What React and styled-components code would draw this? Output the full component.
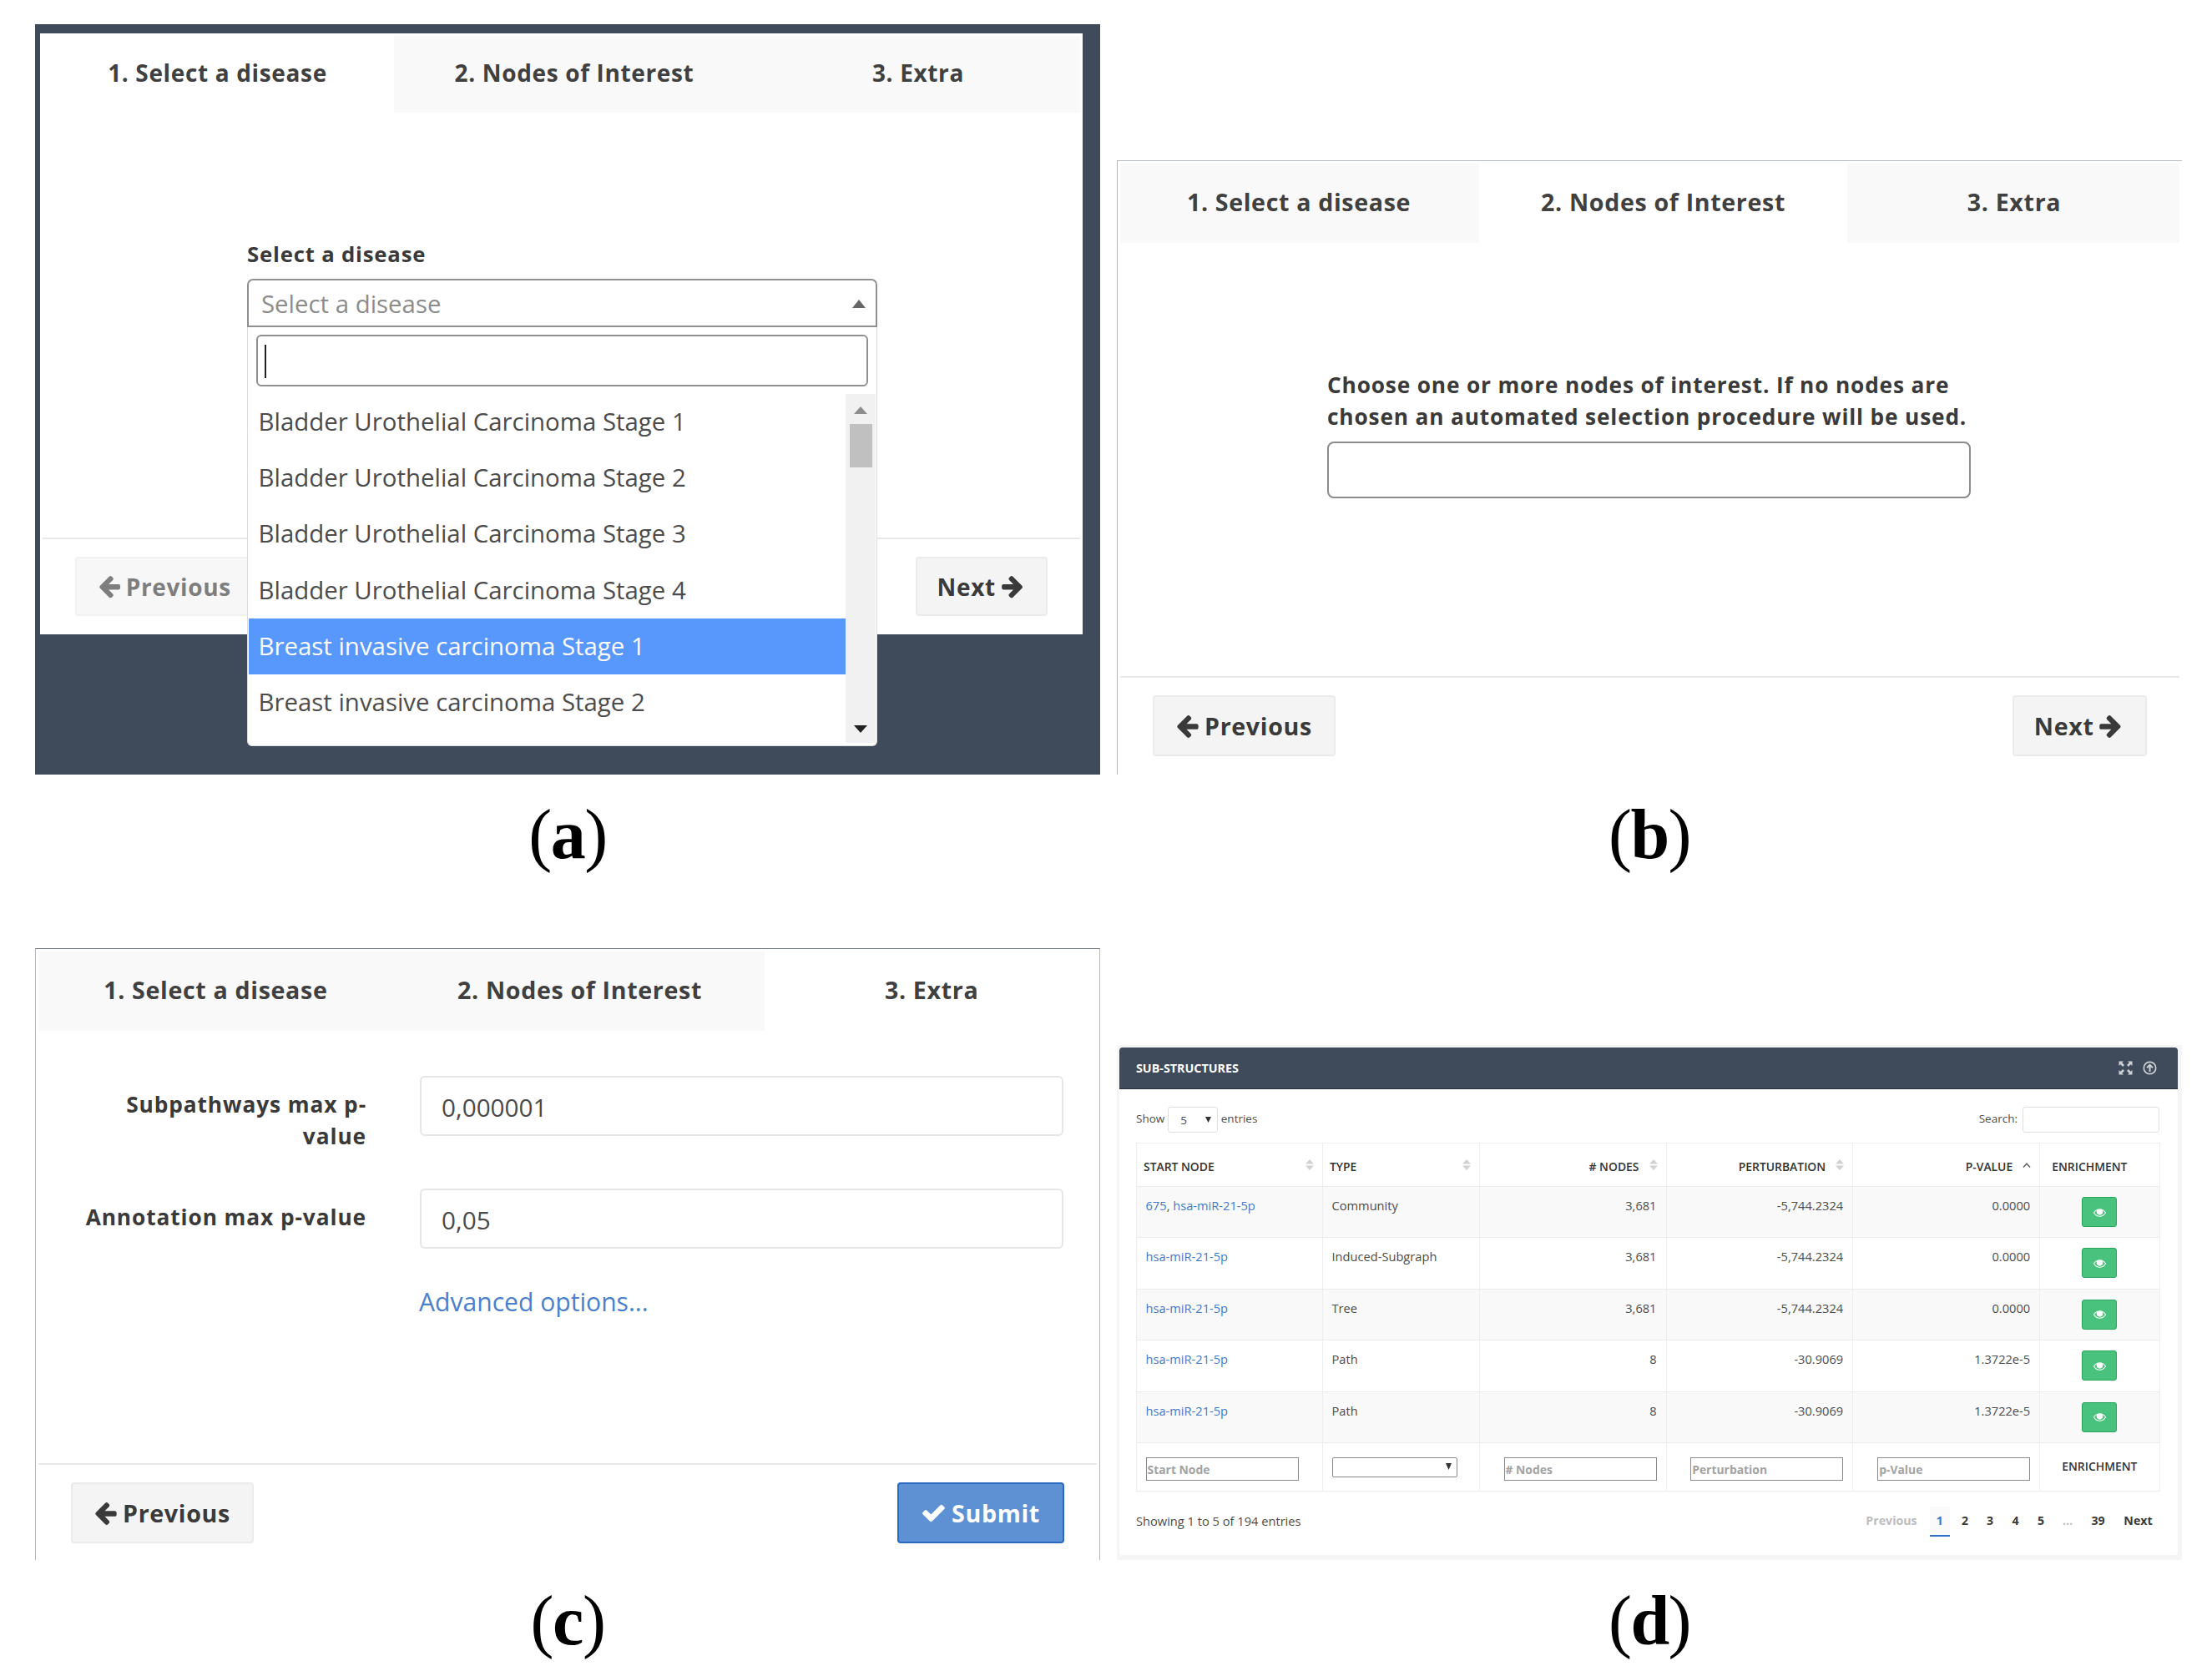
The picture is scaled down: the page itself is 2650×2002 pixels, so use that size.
import React from 'react';
import styled, { createGlobalStyle } from 'styled-components';

const GlobalStyle = createGlobalStyle`
  * {
    box-sizing: border-box;
  }

  body {
    margin: 0;
    background: #fff;
    color: #3a3a3a;
    font-family: 'Open Sans', 'Noto Sans', sans-serif;
  }
`;

const Page = styled.main`
  width: 2650px;
  height: 2002px;
  padding: 29px 36px 0 42px;
  display: grid;
  grid-template-columns: 1276px 1276px;
  grid-template-rows: 1032px 941px;
  column-gap: 20px;
  overflow: hidden;
`;

const Figure = styled.figure`
  margin: 0;
  display: flex;
  flex-direction: column;
  justify-content: flex-end;
`;

const Caption = styled.figcaption`
  height: 133px;
  padding-top: ${props => props.$offset || 22}px;
  text-align: center;
  font-family: 'Liberation Serif', serif;
  font-size: 84px;
  line-height: 100px;
  letter-spacing: -1.5px;
  color: #000;
`;

/* ---------- wizard ---------- */

const Backdrop = styled.div`
  height: 899px;
  padding: 11px 21px 168px 6px;
  background: #3f4a5a;
`;

const Wizard = styled.section`
  height: ${props => props.$height}px;
  font-size: ${props => props.$size}px;
  display: flex;
  flex-direction: column;
  background: #fff;
  border: 0 solid #b4b6ba;
  border-width: ${props => props.$borders || '0'};
  border-top-color: ${props => props.$topColor || '#b5bcc5'};
`;

const Tabs = styled.nav`
  height: ${props => props.$height}px;
  padding: 3px 3px 0;
  display: flex;
  flex-shrink: 0;
`;

const Tab = styled.div`
  width: ${props => props.$width}px;
  padding-bottom: 5px;
  display: flex;
  align-items: center;
  justify-content: center;
  background: ${props => (props.$active ? '#fff' : '#f9f9f9')};
  color: #404040;
  font-weight: 700;
  letter-spacing: 0.023em;
  white-space: nowrap;

  &:first-child {
    padding-right: 2px;
  }

  &:last-child {
    padding-left: 2px;
  }
`;

const Body = styled.div`
  flex: 1;
  min-height: 0;
  padding: ${props => props.$padding};
`;

const Footer = styled.footer`
  height: ${props => props.$height}px;
  flex-shrink: 0;
  margin: 0 3px;
  padding: 21px 39px 0;
  display: flex;
  justify-content: space-between;
  align-items: flex-start;
  border-top: 2px solid #e8e8e8;
`;

const Button = styled.button`
  height: 2.54em;
  padding: ${props => (props.$primary ? '0 0.95em 0 0.91em' : '0 0.9em 0 0.85em')};
  display: flex;
  align-items: center;
  gap: ${props => (props.$primary ? 0.22 : 0.17)}em;
  font: inherit;
  font-weight: 700;
  letter-spacing: 0.023em;
  color: ${props => (props.$primary ? '#fff' : '#3a3a3a')};
  background: ${props => (props.$primary ? '#5d91d3' : '#f4f4f4')};
  border: 2px solid ${props => (props.$primary ? '#2a6ac0' : '#ebebeb')};
  border-radius: 4px;
  opacity: ${props => (props.disabled ? 0.65 : 1)};

  svg {
    width: 1.08em;
    height: 1.08em;
    fill: currentColor;
  }
`;

const Label = styled.label`
  display: block;
  font-size: 0.92em;
  line-height: 38.4px;
  font-weight: 700;
  letter-spacing: 0.031em;
  color: #3a3a3a;
`;

const Field = styled.div`
  position: relative;
  width: ${props => props.$width}px;
  display: flex;
  flex-direction: column;
  gap: 10.6px;
`;

const NodesInput = styled.div`
  height: 68px;
  border: 2px solid #8c8c8c;
  border-radius: 8px;
`;

const SelectBox = styled.div`
  height: 58px;
  padding: 2px 12px 0 15px;
  display: flex;
  align-items: center;
  justify-content: space-between;
  border: 2px solid #909090;
  border-radius: 7px 7px 0 0;
  font-size: 29.4px;
  color: #8c8c8c;
`;

const Dropdown = styled.div`
  position: absolute;
  z-index: 1;
  top: 107px;
  left: 0;
  width: 755px;
  height: 502px;
  padding: 9px 1px 4px 1px;
  background: #fff;
  border: 1px solid #dcdcdc;
  border-top: 0;
  border-radius: 0 0 6px 6px;
`;

const SearchBox = styled.div`
  height: 62px;
  margin: 0 9px 9px 9px;
  padding: 10px 8px;
  border: 2px solid #909090;
  border-radius: 6px;
`;

const Caret = styled.div`
  width: 2px;
  height: 40px;
  background: #222;
`;

const List = styled.div`
  height: 418px;
  display: flex;
  overflow: hidden;
`;

const Options = styled.div`
  flex: 1;
`;

const Option = styled.div`
  height: 67.2px;
  padding: 0 0 1px 11.5px;
  display: flex;
  align-items: center;
  font-size: 29.4px;
  color: ${props => (props.$active ? '#fff' : '#4c4c4c')};
  background: ${props => (props.$active ? '#5897fc' : 'transparent')};
`;

const Scrollbar = styled.div`
  width: 36px;
  padding: 15px 0 12px;
  display: flex;
  flex-direction: column;
  align-items: center;
  background: #f1f1f1;
`;

const Thumb = styled.div`
  width: 27px;
  height: 52px;
  margin: 12px 0 auto;
  background: #c0c0c0;
`;

const FormRow = styled.div`
  margin-bottom: 43px;
  display: flex;
  align-items: flex-start;
`;

const FormLabel = styled(Label)`
  width: 396px;
  min-height: ${props => props.$minHeight}px;
  margin-right: 64px;
  padding-top: 15px;
  letter-spacing: 0.034em;
  text-align: right;
  white-space: nowrap;
`;

const TextInput = styled.div`
  width: 771px;
  height: 72px;
  padding: 3px 24px 0;
  display: flex;
  align-items: center;
  border: 2px solid #e6e6e6;
  border-radius: 6px;
  font-size: 29.7px;
  color: #4a4a4a;
`;

const AdvancedLink = styled.a`
  display: block;
  margin: 44px 0 0 459px;
  font-size: 30.1px;
  line-height: 40px;
  color: #4a80cc;
`;

/* ---------- results table ---------- */

const ResultsFrame = styled.div`
  height: 617px;
  padding: 3px 5px 6px 3px;
  background: #f5f5f5;
`;

const Results = styled.section`
  height: 608px;
  background: #fff;
  border-radius: 4px;
  font-size: 14.65px;
  color: #4c4c4c;
`;

const ResultsHeader = styled.header`
  height: 50px;
  padding: 0 25px 1px 20px;
  display: flex;
  align-items: center;
  justify-content: space-between;
  background: #3f4a5a;
  border-bottom: 1px solid #242f42;
  border-radius: 4px 4px 0 0;
`;

const ResultsTitle = styled.h2`
  margin: 0;
  font-size: 14.3px;
  font-weight: 700;
  color: #fff;
`;

const HeaderIcons = styled.div`
  display: flex;
  gap: 12px;
  color: #cdd1d6;
`;

const Toolbar = styled.div`
  height: 64px;
  padding: 21px 22px 0 20px;
  display: flex;
  justify-content: space-between;
  align-items: flex-start;
  font-size: 13.5px;
`;

const Control = styled.label`
  height: 31px;
  padding-bottom: 4px;
  display: flex;
  align-items: center;
`;

const LengthSelect = styled.span`
  width: 59.5px;
  height: 31px;
  margin: 4px 4px 0 4px;
  padding: 0 7px 0 14px;
  display: flex;
  align-items: center;
  justify-content: space-between;
  border: 1px solid #dfdfdf;
  border-radius: 3px;
`;

const TableSearch = styled.span`
  width: 164px;
  height: 31px;
  margin: 4px 0 0 6px;
  border: 1px solid #dfdfdf;
  border-radius: 3px;
`;

const Table = styled.div`
  width: 1227px;
  margin-left: 20px;
  border: solid #eeeeee;
  border-width: 1px 1px 0;
`;

const Row = styled.div`
  height: ${props => props.$height || 61.4}px;
  display: grid;
  grid-template-columns: 222px 187.5px 224px 223.7px 224px 1fr;
  background: ${props => (props.$striped ? '#f9f9f9' : '#fff')};
  border-bottom: 1px solid #ececec;
`;

const Cell = styled.div`
  padding: 12px 11px 0 10.5px;
  line-height: 20px;
  text-align: ${props => props.$align || 'left'};
  white-space: nowrap;

  & + & {
    border-left: 1px solid #eeeeee;
  }
`;

const HeadCell = styled(Cell)`
  padding: 5px 10px 0 8px;
  display: flex;
  align-items: center;
  gap: 12px;
  justify-content: ${props => (props.$align === 'right' ? 'flex-end' : 'space-between')};
  font-size: 13.9px;
  font-weight: 600;
  color: #333;

  svg {
    margin-bottom: 5px;
  }
`;

const LastHeadCell = styled(HeadCell)`
  padding-left: 14px;
`;

const ActionCell = styled(Cell)`
  padding: 12px 0 0 50px;
`;

const ViewButton = styled.button`
  width: 42px;
  height: 36px;
  padding: 0;
  display: flex;
  align-items: center;
  justify-content: center;
  color: #fff;
  background: #48c27c;
  border: 1px solid #28a65e;
  border-radius: 3px;
`;

const NodeLink = styled.a`
  color: #427acb;
`;

const FilterCell = styled(Cell)`
  padding: 17px 11px 0 10.5px;
  display: flex;
  align-items: flex-start;
  justify-content: ${props => (props.$align === 'right' ? 'flex-end' : 'flex-start')};
`;

const FilterInput = styled.div`
  width: 183px;
  height: 28px;
  padding: 4px 1px 0;
  border: 1px solid #8a8a8a;
  font-size: 13.9px;
  font-weight: 700;
  line-height: 20px;
  text-align: left;
  color: #a2a2a2;
`;

const FilterSelect = styled.div`
  width: 150px;
  height: 24px;
  padding: 6px 6px 0 0;
  display: flex;
  justify-content: flex-end;
  align-items: flex-start;
  border: 1px solid #8a8a8a;
  border-radius: 2px;
`;

const FootLabel = styled(Cell)`
  padding: 18px 0 0 26px;
  font-size: 13.9px;
  font-weight: 600;
  color: #333;
`;

const TableFooter = styled.div`
  padding: 18px 16px 0 20px;
  display: flex;
  align-items: flex-start;
  justify-content: space-between;
  line-height: 34px;
`;

const Pagination = styled.nav`
  display: flex;
  font-weight: 700;
  font-size: 14.2px;
`;

const PageItem = styled.span`
  width: ${props => props.$width}px;
  height: 36px;
  text-align: center;
  color: ${props => (props.$active ? '#3a78cc' : props.$muted ? '#bdbdbd' : '#3a3a3a')};
  background: ${props => (props.$active ? '#fafafa' : 'transparent')};
  border-bottom: 2px solid ${props => (props.$active ? '#2f70c8' : 'transparent')};
`;

const ArrowLeft = () => (
  <svg viewBox="0 0 1792 1792">
    <path d="M1664 896v128q0 53-32.5 90.5t-84.5 37.5h-704l293 294q38 36 38 90t-38 90l-75 76q-37 37-90 37-52 0-91-37l-651-652q-37-37-37-90 0-52 37-91l651-650q38-38 91-38 52 0 90 38l75 74q38 38 38 91t-38 91l-293 293h704q52 0 84.5 37.5t32.5 90.5z" />
  </svg>
);

const ArrowRight = () => (
  <svg viewBox="0 0 1792 1792">
    <path d="M1600 960q0 54-37 91l-651 651q-39 37-91 37-51 0-90-37l-75-75q-38-38-38-91t38-91l293-293h-704q-52 0-84.5-37.5t-32.5-90.5v-128q0-53 32.5-90.5t84.5-37.5h704l-293-294q-38-36-38-90t38-90l75-75q38-38 90-38 53 0 91 38l651 651q37 35 37 90z" />
  </svg>
);

const Check = () => (
  <svg viewBox="0 0 1792 1792">
    <path d="M1671 566q0 40-28 68l-724 724-136 136q-28 28-68 28t-68-28l-136-136-362-362q-28-28-28-68t28-68l136-136q28-28 68-28t68 28l294 295 656-657q28-28 68-28t68 28l136 136q28 28 28 68z" />
  </svg>
);

const Eye = () => (
  <svg width="15" height="15" viewBox="0 0 1792 1792" fill="currentColor">
    <path d="M1664 960q-152-236-381-353 61 104 61 225 0 185-131.5 316.5t-316.5 131.5-316.5-131.5-131.5-316.5q0-121 61-225-229 117-381 353 133 205 333.5 326.5t434.5 121.5 434.5-121.5 333.5-326.5zm-720-384q0-20-14-34t-34-14q-125 0-214.5 89.5t-89.5 214.5q0 20 14 34t34 14 34-14 14-34q0-86 61-147t147-61q20 0 34-14t14-34zm848 384q0 34-20 69-140 230-376.5 368.5t-499.5 138.5-499.5-139-376.5-368q-20-35-20-69t20-69q140-229 376.5-368t499.5-139 499.5 139 376.5 368q20 35 20 69z" />
    <circle cx="896" cy="832" r="300" />
  </svg>
);

const Triangle = ({ up, width = 16, height = 9, color = '#666' }) => (
  <svg width={width} height={height} viewBox="0 0 16 9" preserveAspectRatio="none" fill={color}>
    <path d={up ? 'M0 9L8 0L16 9z' : 'M0 0L8 9L16 0z'} />
  </svg>
);

const SortIcon = () => (
  <svg width="10" height="13" viewBox="0 0 10 13" fill="#d2d2d2">
    <path d="M0 5.5L5 0L10 5.5zM0 7.5L5 13L10 7.5z" />
  </svg>
);

const SortAsc = () => (
  <svg width="10" height="13" viewBox="0 0 10 13" fill="none" stroke="#666" strokeWidth="1.6">
    <path d="M1 9.5L5 5.2L9 9.5" />
  </svg>
);

const ExpandIcon = () => (
  <svg width="17" height="17" viewBox="0 0 17 17" fill="currentColor">
    <path d="M0.5 0.5H6L4.2 2.3L7 5.1L5.1 7L2.3 4.2L0.5 6zM16.5 0.5V6L14.7 4.2L11.9 7L10 5.1L12.8 2.3L11 0.5zM0.5 16.5V11L2.3 12.8L5.1 10L7 11.9L4.2 14.7L6 16.5zM16.5 16.5H11L12.8 14.7L10 11.9L11.9 10L14.7 12.8L16.5 11z" />
  </svg>
);

const CircleUpIcon = () => (
  <svg width="17" height="17" viewBox="0 0 17 17" fill="none" stroke="currentColor" strokeWidth="1.7">
    <circle cx="8.5" cy="8.5" r="7.2" />
    <path d="M8.5 13V5M5 8.3L8.5 4.8L12 8.3" strokeWidth="2" />
  </svg>
);

const TAB_NAMES = ['1. Select a disease', '2. Nodes of Interest', '3. Extra'];

const WizardTabs = ({ active, height, widths }) => (
  <Tabs $height={height}>
    {TAB_NAMES.map((name, i) => (
      <Tab key={name} $width={widths[i]} $active={i === active}>
        {name}
      </Tab>
    ))}
  </Tabs>
);

const options = [
  'Bladder Urothelial Carcinoma Stage 1',
  'Bladder Urothelial Carcinoma Stage 2',
  'Bladder Urothelial Carcinoma Stage 3',
  'Bladder Urothelial Carcinoma Stage 4',
  'Breast invasive carcinoma Stage 1',
  'Breast invasive carcinoma Stage 2',
];

const rows = [
  { nodes: ['675', 'hsa-miR-21-5p'], type: 'Community', count: '3,681', perturbation: '-5,744.2324', p: '0.0000' },
  { nodes: ['hsa-miR-21-5p'], type: 'Induced-Subgraph', count: '3,681', perturbation: '-5,744.2324', p: '0.0000' },
  { nodes: ['hsa-miR-21-5p'], type: 'Tree', count: '3,681', perturbation: '-5,744.2324', p: '0.0000' },
  { nodes: ['hsa-miR-21-5p'], type: 'Path', count: '8', perturbation: '-30.9069', p: '1.3722e-5' },
  { nodes: ['hsa-miR-21-5p'], type: 'Path', count: '8', perturbation: '-30.9069', p: '1.3722e-5' },
];

const pages = [
  { label: 'Previous', width: 91, muted: true },
  { label: '1', width: 24.5, active: true },
  { label: '2', width: 36 },
  { label: '3', width: 24 },
  { label: '4', width: 37 },
  { label: '5', width: 24 },
  { label: '...', width: 40, muted: true },
  { label: '39', width: 33 },
  { label: 'Next', width: 63 },
];

const DiseaseStep = () => (
  <Backdrop>
    <Wizard $height={720} $size={28}>
      <WizardTabs active={0} height={95} widths={[421, 432, 390]} />
      <Body $padding="150px 0 0 248px">
        <Field $width={755}>
          <Label>Select a disease</Label>
          <SelectBox>
            Select a disease
            <Triangle up height={10} />
          </SelectBox>
          <Dropdown>
            <SearchBox>
              <Caret />
            </SearchBox>
            <List>
              <Options>
                {options.map((option, i) => (
                  <Option key={option} $active={i === 4}>
                    {option}
                  </Option>
                ))}
              </Options>
              <Scrollbar>
                <Triangle up color="#8c8c8c" />
                <Thumb />
                <Triangle color="#222" />
              </Scrollbar>
            </List>
          </Dropdown>
        </Field>
      </Body>
      <Footer $height={116}>
        <Button disabled>
          <ArrowLeft />
          Previous
        </Button>
        <Button>
          Next
          <ArrowRight />
        </Button>
      </Footer>
    </Wizard>
  </Backdrop>
);

const NodesStep = () => (
  <Wizard $height={736} $size={28.6} $borders="1px 0 0 1px">
    <WizardTabs active={1} height={98} widths={[430, 441, 398]} />
    <Body $padding="151px 0 0 251px">
      <Field $width={771}>
        <Label>
          Choose one or more nodes of interest. If no nodes are
          <br />
          chosen an automated selection procedure will be used.
        </Label>
        <NodesInput />
      </Field>
    </Body>
    <Footer $height={118}>
      <Button>
        <ArrowLeft />
        Previous
      </Button>
      <Button>
        Next
        <ArrowRight />
      </Button>
    </Footer>
  </Wizard>
);

const ExtraStep = () => (
  <Wizard $height={733} $size={28.6} $borders="1px 1px 0 1px" $topColor="#6b7685">
    <WizardTabs active={2} height={98} widths={[427, 444, 398]} />
    <Body $padding="54px 0 0">
      <FormRow>
        <FormLabel $minHeight={92}>
          Subpathways max p-
          <br />
          value
        </FormLabel>
        <TextInput>0,000001</TextInput>
      </FormRow>
      <FormRow>
        <FormLabel>Annotation max p-value</FormLabel>
        <TextInput>0,05</TextInput>
      </FormRow>
      <AdvancedLink>Advanced options...</AdvancedLink>
    </Body>
    <Footer $height={116}>
      <Button>
        <ArrowLeft />
        Previous
      </Button>
      <Button $primary>
        <Check />
        Submit
      </Button>
    </Footer>
  </Wizard>
);

const SubStructures = () => (
  <ResultsFrame>
    <Results>
      <ResultsHeader>
        <ResultsTitle>SUB-STRUCTURES</ResultsTitle>
        <HeaderIcons>
          <ExpandIcon />
          <CircleUpIcon />
        </HeaderIcons>
      </ResultsHeader>
      <Toolbar>
        <Control>
          Show
          <LengthSelect>
            5
            <Triangle width={7} height={7} color="#333" />
          </LengthSelect>
          entries
        </Control>
        <Control>
          Search:
          <TableSearch />
        </Control>
      </Toolbar>
      <Table>
        <Row $height={52}>
          <HeadCell>START NODE <SortIcon /></HeadCell>
          <HeadCell>TYPE <SortIcon /></HeadCell>
          <HeadCell $align="right"># NODES <SortIcon /></HeadCell>
          <HeadCell $align="right">PERTURBATION <SortIcon /></HeadCell>
          <HeadCell $align="right">P-VALUE <SortAsc /></HeadCell>
          <LastHeadCell>ENRICHMENT</LastHeadCell>
        </Row>
        {rows.map((row, i) => (
          <Row key={i} $striped={i % 2 === 0}>
            <Cell>
              {row.nodes.map((node, n) => (
                <React.Fragment key={node}>
                  {n > 0 && ', '}
                  <NodeLink>{node}</NodeLink>
                </React.Fragment>
              ))}
            </Cell>
            <Cell>{row.type}</Cell>
            <Cell $align="right">{row.count}</Cell>
            <Cell $align="right">{row.perturbation}</Cell>
            <Cell $align="right">{row.p}</Cell>
            <ActionCell>
              <ViewButton>
                <Eye />
              </ViewButton>
            </ActionCell>
          </Row>
        ))}
        <Row $height={58.5}>
          <FilterCell>
            <FilterInput>Start Node</FilterInput>
          </FilterCell>
          <FilterCell>
            <FilterSelect>
              <Triangle width={7} height={8} color="#333" />
            </FilterSelect>
          </FilterCell>
          <FilterCell $align="right">
            <FilterInput># Nodes</FilterInput>
          </FilterCell>
          <FilterCell $align="right">
            <FilterInput>Perturbation</FilterInput>
          </FilterCell>
          <FilterCell $align="right">
            <FilterInput>p-Value</FilterInput>
          </FilterCell>
          <FootLabel>ENRICHMENT</FootLabel>
        </Row>
      </Table>
      <TableFooter>
        Showing 1 to 5 of 194 entries
        <Pagination>
          {pages.map(page => (
            <PageItem key={page.label} $width={page.width} $active={page.active} $muted={page.muted}>
              {page.label}
            </PageItem>
          ))}
        </Pagination>
      </TableFooter>
    </Results>
  </ResultsFrame>
);

const App = () => (
  <>
    <GlobalStyle />
    <Page>
      <Figure>
        <DiseaseStep />
        <Caption>(<b>a</b>)</Caption>
      </Figure>
      <Figure>
        <NodesStep />
        <Caption>(<b>b</b>)</Caption>
      </Figure>
      <Figure>
        <ExtraStep />
        <Caption $offset={23}>(<b>c</b>)</Caption>
      </Figure>
      <Figure>
        <SubStructures />
        <Caption $offset={23}>(<b>d</b>)</Caption>
      </Figure>
    </Page>
  </>
);

export default App;
